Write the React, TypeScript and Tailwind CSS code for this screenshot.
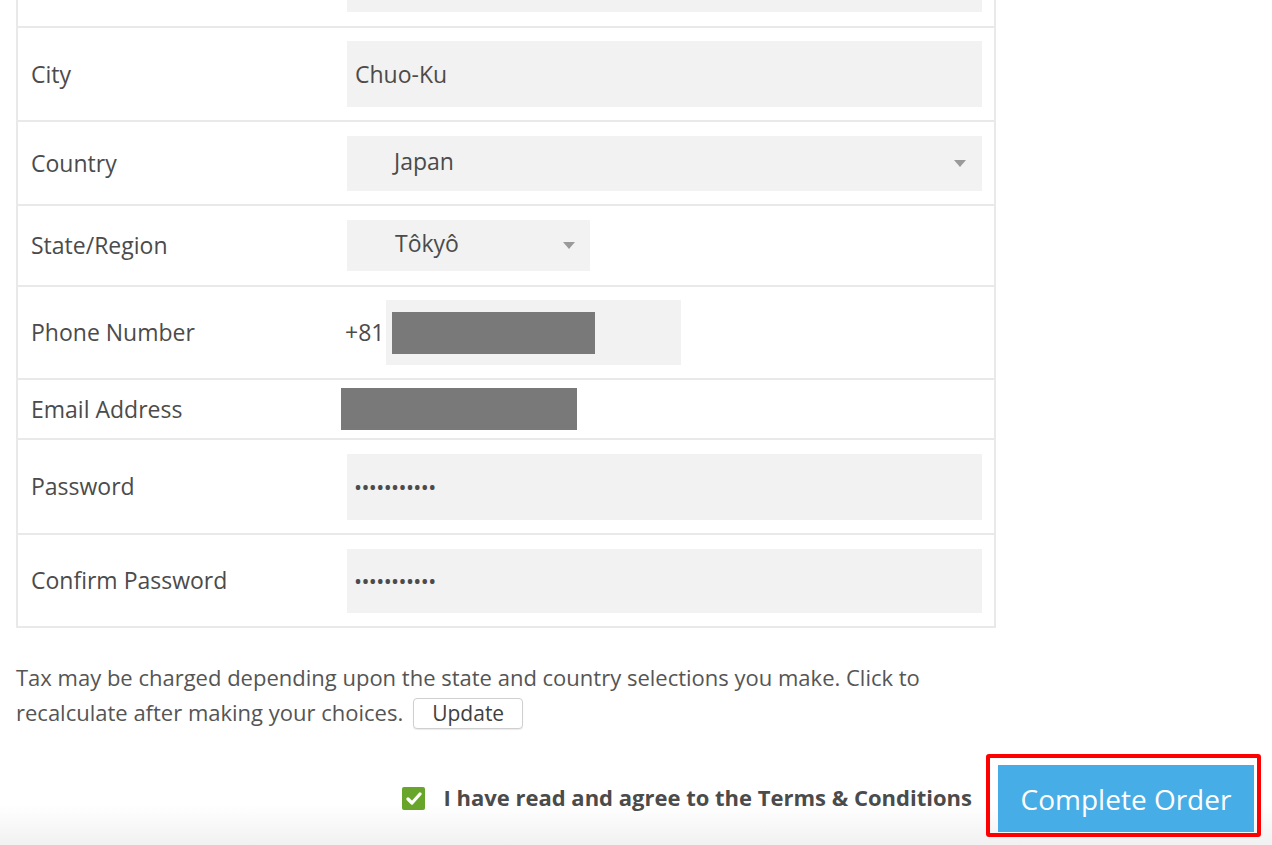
import React from 'react'

const font = { fontFamily: '"Open Sans", "Liberation Sans", sans-serif' }

function Caret() {
  return (
    <svg width="12" height="7" viewBox="0 0 12 7" className="shrink-0">
      <path d="M0 0 L12 0 L6 7 Z" fill="#9a9a9a" />
    </svg>
  )
}

function Row({
  label,
  height,
  children,
  last,
}: {
  label: string
  height: string
  children?: React.ReactNode
  last?: boolean
}) {
  return (
    <div className={`flex items-center ${height} ${last ? '' : 'border-b-2 border-[#e9e9e9]'}`}>
      <div className="w-[329px] shrink-0 pl-[13px] text-[23px] text-[#4b4b4b]">{label}</div>
      <div className="flex flex-1 items-center pr-[12px]">{children}</div>
    </div>
  )
}

export default function App() {
  return (
    <div className="relative h-[845px] w-[1272px] overflow-hidden bg-white" style={font}>
      {/* address table */}
      <div className="ml-4 w-[980px] border-x-2 border-b-2 border-[#e9e9e9]">
        <div className="h-[28px] border-b-2 border-[#e9e9e9] pr-[12px] pl-[329px]">
          <div className="h-[12px] bg-[#f2f2f2]" />
        </div>

        <Row label="City" height="h-[94px]">
          <div className="flex h-[66px] flex-1 items-center bg-[#f2f2f2] pl-[8px] text-[23px] text-[#4b4b4b]">
            Chuo-Ku
          </div>
        </Row>

        <Row label="Country" height="h-[84px]">
          <div className="flex h-[55px] flex-1 items-center justify-between bg-[#f2f2f2] pr-[16px] pl-[47px] text-[23px] text-[#4b4b4b]">
            <span className="-mt-[4px]">Japan</span>
            <Caret />
          </div>
        </Row>

        <Row label="State/Region" height="h-[81px]">
          <div className="flex h-[51px] w-[243px] items-center justify-between bg-[#f2f2f2] pr-[15px] pl-[48px] text-[23px] text-[#4b4b4b]">
            <span className="-mt-[4px]">Tôkyô</span>
            <Caret />
          </div>
        </Row>

        <Row label="Phone Number" height="h-[93px]">
          <span className="-ml-[2px] w-[41px] text-[23px] text-[#4b4b4b]">+81</span>
          <div className="flex h-[65px] w-[295px] items-center bg-[#f2f2f2] pl-[6px]">
            <div className="h-[42px] w-[203px] bg-[#797979]" />
          </div>
        </Row>

        <Row label="Email Address" height="h-[60px]">
          <div className="-ml-[6px] h-[42px] w-[236px] bg-[#797979]" />
        </Row>

        <Row label="Password" height="h-[95px]">
          <div className="flex h-[66px] flex-1 items-center bg-[#f2f2f2] pl-[8px] text-[16px] font-bold tracking-[1.4px] text-[#4b4b4b]">
            •••••••••••
          </div>
        </Row>

        <Row label="Confirm Password" height="h-[91px]" last>
          <div className="flex h-[64px] flex-1 items-center bg-[#f2f2f2] pl-[8px] text-[16px] font-bold tracking-[1.4px] text-[#4b4b4b]">
            •••••••••••
          </div>
        </Row>
      </div>

      {/* tax note */}
      <div className="mt-[32px] ml-4 text-[22px] leading-[35px] text-[#555555]">
        <div>Tax may be charged depending upon the state and country selections you make. Click to</div>
        <div className="flex items-center">
          <span>recalculate after making your choices.</span>
          <button className="ml-[10px] mt-[2px] flex h-[31px] items-center rounded-[4px] border border-[#cfcfcf] bg-white px-[18px] text-[21px] leading-none text-[#3f3f3f] shadow-[0_1px_1px_rgba(0,0,0,0.08)]">
            Update
          </button>
        </div>
      </div>

      {/* agree + submit */}
      <div className="absolute inset-x-0 bottom-0 h-[40px] bg-gradient-to-b from-white to-[#f1f1f1]" />
      <div className="relative mt-[24px] flex items-center justify-end pr-[11px]">
        <div className="mt-[6px] flex h-[23px] w-[23px] items-center justify-center rounded-[2px] bg-[#6aa52b]">
          <svg width="16" height="13" viewBox="0 0 16 13">
            <path d="M2 7 L6 11 L14 2" stroke="white" strokeWidth="3.2" fill="none" strokeLinecap="round" strokeLinejoin="round" />
          </svg>
        </div>
        <span className="mt-[4px] ml-[18px] text-[22px] font-bold text-[#4b4b4b]">
          I have read and agree to the Terms &amp; Conditions
        </span>
        <div className="ml-[14px] rounded-[3px] border-4 border-[#ff0000] pt-[7px] pr-[3px] pb-[1px] pl-[8px]">
          <button className="flex h-[67px] w-[256px] items-center justify-center bg-[#47ade6] text-[28px] text-white">
            Complete Order
          </button>
        </div>
      </div>
    </div>
  )
}
